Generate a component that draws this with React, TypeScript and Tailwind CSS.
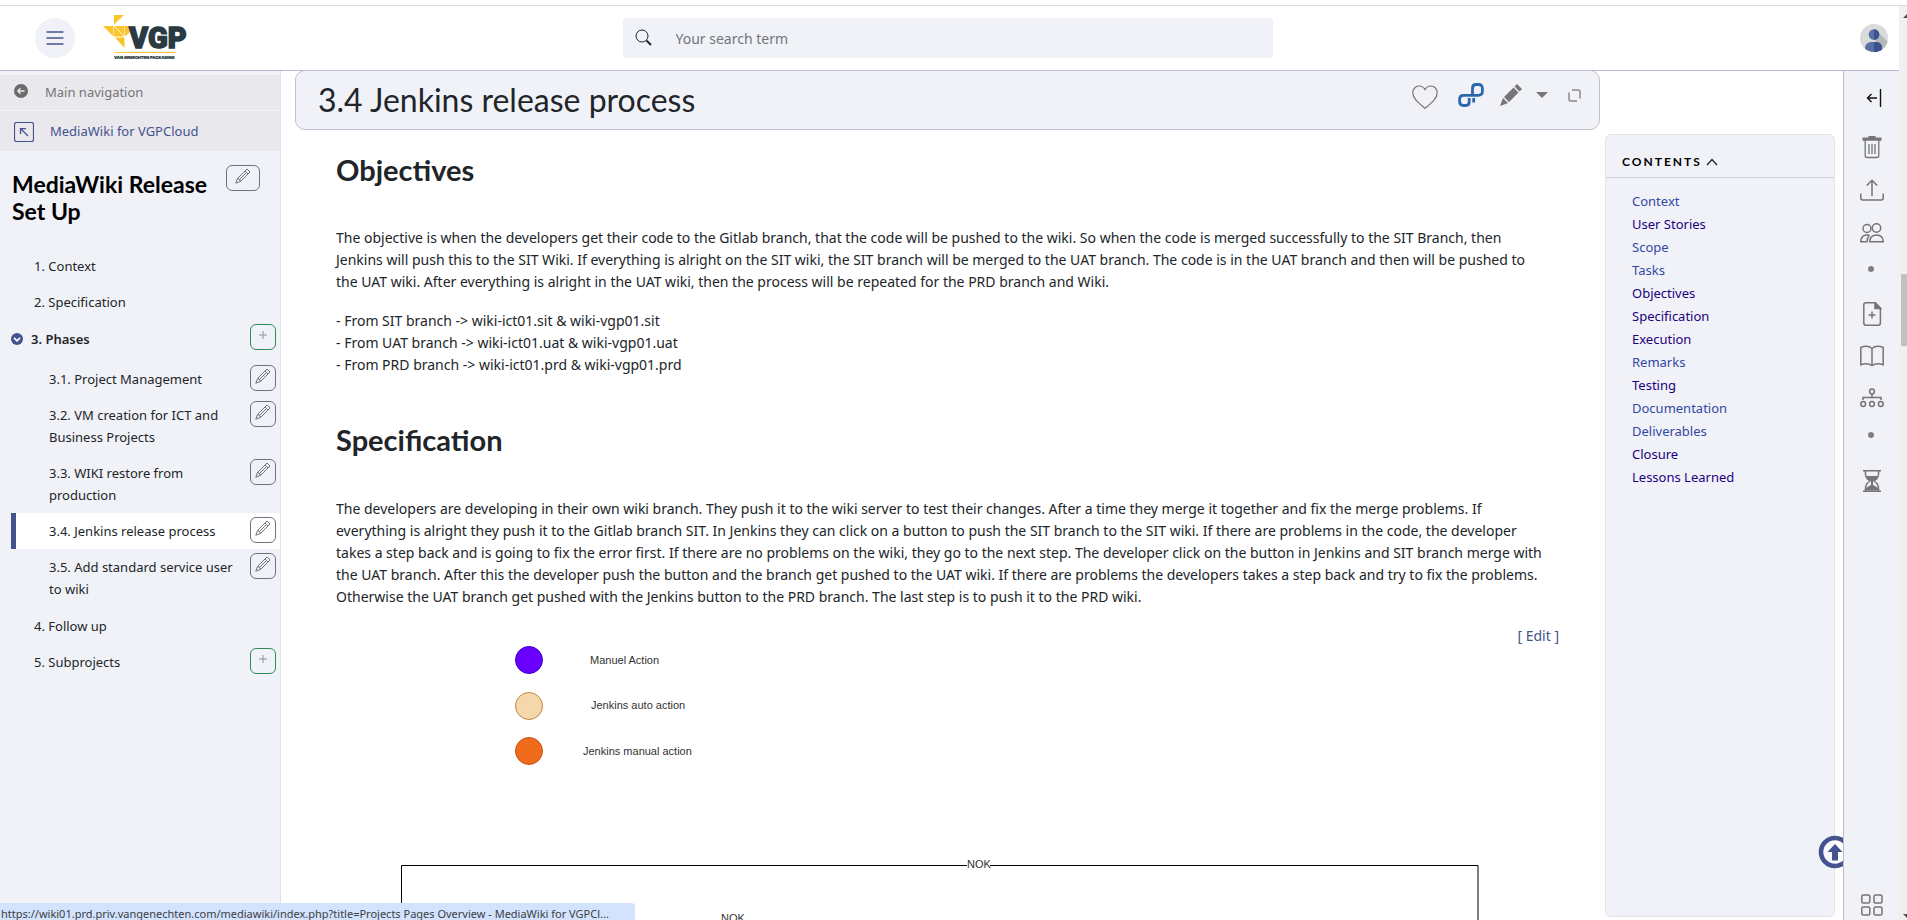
import type { ReactNode } from "react";

type NavItem = { label: string; button?: "edit" | "add"; active?: boolean };

const topItems: NavItem[] = [{ label: "1. Context" }, { label: "2. Specification" }];

const phases: NavItem[] = [
  { label: "3.1. Project Management", button: "edit" },
  { label: "3.2. VM creation for ICT and Business Projects", button: "edit" },
  { label: "3.3. WIKI restore from production", button: "edit" },
  { label: "3.4. Jenkins release process", button: "edit", active: true },
  { label: "3.5. Add standard service user to wiki", button: "edit" },
];

const lastItems: NavItem[] = [{ label: "4. Follow up" }, { label: "5. Subprojects", button: "add" }];

const contents = [
  { label: "Context", visited: false },
  { label: "User Stories", visited: true },
  { label: "Scope", visited: false },
  { label: "Tasks", visited: false },
  { label: "Objectives", visited: true },
  { label: "Specification", visited: true },
  { label: "Execution", visited: true },
  { label: "Remarks", visited: false },
  { label: "Testing", visited: true },
  { label: "Documentation", visited: false },
  { label: "Deliverables", visited: false },
  { label: "Closure", visited: true },
  { label: "Lessons Learned", visited: true },
];

function Pencil() {
  return (
    <svg viewBox="0 0 16 16" className="size-4" fill="none" stroke="#6c757d" strokeWidth="1">
      <path d="M.8 15.2 2.6 10.4 12 1l3 3-9.400 9.400zM10 3l3 3M2.600 10.400l1.200.3.4 1.200 1.100.3.3 1.100M11 5 4.200 11.800" />
    </svg>
  );
}

function ItemButton({ kind, label }: { kind: "edit" | "add"; label: string }) {
  return kind === "edit" ? (
    <button aria-label={`Edit ${label}`} className="flex size-[26px] shrink-0 justify-center rounded-md border border-[#6c757d] pt-0.5">
      <Pencil />
    </button>
  ) : (
    <button aria-label={`Add to ${label}`} className="flex size-[26px] shrink-0 justify-center rounded-md border border-[#2e8b57] pt-1.5">
      <svg viewBox="0 0 8 8" className="size-2" stroke="#8d959c" fill="none">
        <path d="M4 0v8M0 4h8" />
      </svg>
    </button>
  );
}

function NavRow({ item, nested }: { item: NavItem; nested?: boolean }) {
  return (
    <li className={item.active ? "ml-[11px] flex justify-between border-l-[5px] border-[#44538d] bg-white pl-[33px] pr-1" : nested ? "flex justify-between pl-[49px] pr-1" : "flex justify-between pl-[34px] pr-1"}>
      <a href="#" className="w-[197px] py-[7px] leading-[22px]">{item.label}</a>
      {item.button && (
        <span className="pt-1">
          <ItemButton kind={item.button} label={item.label} />
        </span>
      )}
    </li>
  );
}

function Tool({ label, children }: { label: string; children: ReactNode }) {
  return (
    <button aria-label={label} className="flex size-6 items-center justify-center">
      <svg viewBox="0 0 24 24" className="size-6" fill="none" stroke="#757575" strokeWidth="1.5">
        {children}
      </svg>
    </button>
  );
}

function Dot() {
  return <div className="mr-0.5 size-1.5 rounded-full bg-[#808080]" />;
}

function Logo() {
  return (
    <svg viewBox="0 0 86 48" className="h-12 w-[86px]" role="img" aria-label="VGP Van Genechten Packaging">
      <g fill="#f9c52a">
        <path d="M11 1h10L11 10.500zM0 12h10.500v10.500zM11.500 12h10v10zM11 12.500l10 10H11zM22 12h11L22 22.500zM12 23.500h9.500V34z" />
        <path d="M11.500 38h61v1h-61z" />
      </g>
      <text x="26" y="34" fontFamily="Roboto, sans-serif" fontWeight="900" fontSize="29" fill="#293a42" stroke="#293a42" strokeWidth="1.4">VGP</text>
      <text x="11" y="45" fontFamily="Inter, sans-serif" fontWeight="900" fontSize="4" fill="#293a42" stroke="#293a42" strokeWidth="0.2">VAN GENECHTEN PACKAGING</text>
    </svg>
  );
}

function Header() {
  return (
    <header className="flex h-[65px] shrink-0 items-center border-b border-[#b5bad6] pr-1">
      <div className="flex flex-1 basis-0 items-center">
        <button aria-label="Toggle navigation" className="ml-[35px] flex size-10 items-center justify-center rounded-full bg-[#f1f2f8]">
          <svg viewBox="0 0 18 14" className="h-[14px] w-[18px]" stroke="#44538d" strokeWidth="1.300" strokeLinecap="round">
            <path d="M1 1h16M1 7h16M1 13h16" />
          </svg>
        </button>
        <a href="#" className="ml-7">
          <Logo />
        </a>
      </div>
      <form className="flex h-10 w-[650px] items-center rounded bg-[#f1f2f8] pl-3">
        <label htmlFor="search" className="-mt-0.5">
          <svg viewBox="0 0 17 17" className="size-[17px]" fill="none" stroke="#212529" role="img" aria-label="Search">
            <circle cx="7" cy="7" r="6" />
            <path d="m11.500 11.500 4.500 4.500" strokeWidth="2" />
          </svg>
        </label>
        <input id="search" placeholder="Your search term" className="h-full flex-1 bg-transparent pl-6 text-[14px] outline-none placeholder:text-[#70757a]" />
      </form>
      <div className="flex flex-1 basis-0 justify-end">
        <button aria-label="User menu" className="mr-[7px] size-7">
          <svg viewBox="0 0 28 28" className="size-7">
            <clipPath id="avatar"><circle cx="14" cy="14" r="14" /></clipPath>
            <g clipPath="url(#avatar)">
              <path fill="#d9dbdb" d="M0 0h28v28H0z" />
              <path fill="#b5b8b9" d="m17 7 11 11v10H14z" />
              <rect x="5" y="18" width="17" height="14" rx="6" fill="#5870a5" />
              <path fill="#3a5390" d="M14 18h2q6 0 6 6v8h-8z" />
              <circle cx="14" cy="10.500" r="5.300" fill="#5870a5" />
              <path fill="#3a5390" d="M14 5.200a5.300 5.300 0 0 1 0 10.600z" />
            </g>
          </svg>
        </button>
      </div>
    </header>
  );
}

function Sidebar() {
  return (
    <nav className="w-[281px] shrink-0 overflow-hidden border-r border-[#dfe1e6] bg-[#f1f2f8] pt-1 text-[13px] text-[#212529]">
      <a href="#" className="flex h-9 items-center border-b border-[#f4f4f8] bg-[#e9e8ed] pl-3.5 text-[#757575]">
        <svg viewBox="0 0 14 14" className="-mt-1 size-[14px]">
          <circle cx="7" cy="7" r="7" fill="#6c6c6c" />
          <path d="M10.500 7H4M6.500 4.300 3.800 7l2.700 2.700" fill="none" stroke="#e9e8ed" strokeWidth="1.300" />
        </svg>
        <span className="ml-[17px]">Main navigation</span>
      </a>
      <a href="#" className="flex h-10 items-center bg-[#e9e8ed] pt-px pl-3.5 text-[#44538d]">
        <svg viewBox="0 0 20 20" className="size-5" fill="none" stroke="#44538d">
          <rect x=".5" y=".5" width="19" height="19" rx="2" strokeWidth="1.200" />
          <path d="M14 14 7 7M6.500 12V6.700H12" strokeWidth="1.300" />
        </svg>
        <span className="ml-4">MediaWiki for VGPCloud</span>
      </a>
      <div className="flex items-start justify-between pl-3 pr-5 pt-3.5">
        <h2 className="mt-1.5 font-['Lato',sans-serif] text-[23px] leading-[27px] font-bold text-black">
          MediaWiki Release<br />Set Up
        </h2>
        <button aria-label="Edit book" className="flex h-[26px] w-[34px] justify-center rounded-md border border-[#6c757d] pt-0.5">
          <Pencil />
        </button>
      </div>
      <ul className="mt-[23px]">
        {topItems.map((i) => <NavRow key={i.label} item={i} />)}
        <li className="mt-px">
          <div className="flex items-start justify-between pl-[11px] pr-1">
            <div className="flex items-center">
              <button aria-label="Collapse Phases">
                <svg viewBox="0 0 12 12" className="size-3">
                  <circle cx="6" cy="6" r="6" fill="#44538d" />
                  <path d="M3 4.800 6 7.800l3-3" fill="none" stroke="#fff" strokeWidth="1.800" />
                </svg>
              </button>
              <a href="#" className="py-[7px] pl-2 leading-[22px] font-semibold">3. Phases</a>
            </div>
            <span className="pt-[3px]"><ItemButton kind="add" label="3. Phases" /></span>
          </div>
          <ul className="mt-1">
            {phases.map((i) => <NavRow key={i.label} item={i} nested />)}
          </ul>
        </li>
        <li className="mt-px">
          <ul>
            {lastItems.map((i) => <NavRow key={i.label} item={i} />)}
          </ul>
        </li>
      </ul>
    </nav>
  );
}

function TitleBar() {
  return (
    <div className="-mt-px flex h-[60px] items-start justify-between rounded-[10px] border border-[#bfc1cb] bg-[#f1f2f8] pr-[18px] pl-[22px]">
      <h1 className="mt-2 font-['Lato',sans-serif] text-[32px] leading-[42px] text-[#212529]">3.4 Jenkins release process</h1>
      <div className="mt-2.5 flex items-center">
        <button aria-label="Add to watchlist" className="mt-1">
          <svg viewBox="0 0 26 24" className="h-6 w-[26px]" fill="none" stroke="#757575" strokeWidth="1.200">
            <path d="M13 23.300C6 17.500.8 13.500.8 7.800.8 4 3.500 1 7 1c2.600 0 4.800 1.400 6 3.600C14.200 2.400 16.400 1 19 1c3.500 0 6.200 3 6.200 6.800 0 5.700-5.200 9.700-12.200 15.500z" />
          </svg>
        </button>
        <button aria-label="Share link" className="ml-5">
          <svg viewBox="0 0 26 24" className="h-6 w-[26px]" fill="none" stroke="#2c68ad" strokeWidth="2.800">
            <path d="M11.200 15V19q0 3.500-3.500 3.500H5.500Q1.600 22.500 1.600 18.800v-2.500q0-4 4-4H20q4.400 0 4.400-4V5.500Q24.400 1.500 20.500 1.500H18q-3.500 0-3.500 4v6.500M15.700 15v4.500" />
          </svg>
        </button>
        <button aria-label="Edit page" className="ml-4">
          <svg viewBox="0 0 22 22" className="size-[22px]" fill="#757575">
            <path d="M0 22 3 14l5 5zM4 13 13.500 3.500l5 5L9 18zM14.500 2.500 17 0l5 5-2.500 2.500z" />
          </svg>
        </button>
        <button aria-label="More actions" className="ml-3.5">
          <svg viewBox="0 0 12 6" className="h-1.5 w-3" fill="#757575"><path d="M0 0h12L6 6z" /></svg>
        </button>
        <button aria-label="Full screen" className="ml-5">
          <svg viewBox="0 0 13 13" className="size-[13px]" fill="none" stroke="#8a8a8a" strokeWidth="1.500">
            <path d="M4 1h6.500q1.500 0 1.500 1.500V9.500M9 12H2.500Q1 12 1 10.500V3.500" />
          </svg>
        </button>
      </div>
    </div>
  );
}

function ReleaseDiagram() {
  return (
    <svg className="h-[280px] w-full overflow-visible font-['Liberation_Sans',sans-serif] text-[11px]" fill="#333">
      <circle cx="193" cy="13" r="13.500" fill="#6a00ff" stroke="#3700cc" />
      <circle cx="193" cy="59" r="13.500" fill="#f5d7ac" stroke="#c0873f" />
      <circle cx="193" cy="104" r="13.500" fill="#f06c1a" stroke="#c8501a" />
      <text x="254" y="17">Manuel Action</text>
      <text x="255" y="62">Jenkins auto action</text>
      <text x="247" y="108">Jenkins manual action</text>
      <path d="M631 218.500H65.500V280M654 218.500h488V280" fill="none" stroke="#000" />
      <text x="631" y="221">NOK</text>
      <text x="385" y="275">NOK</text>
    </svg>
  );
}

function Article() {
  return (
    <article className="pl-[41px] pr-[41px] text-[14px] leading-[22px] text-[#212529]">
      <h2 className="mt-[22px] font-['Lato',sans-serif] text-[29px] leading-9 font-bold">Objectives</h2>
      <p className="mt-[39px]">
        The objective is when the developers get their code to the Gitlab branch, that the code will be pushed to the wiki. So when the code is merged successfully to the SIT Branch, then<br />
        Jenkins will push this to the SIT Wiki. If everything is alright on the SIT wiki, the SIT branch will be merged to the UAT branch. The code is in the UAT branch and then will be pushed to<br />
        the UAT wiki. After everything is alright in the UAT wiki, then the process will be repeated for the PRD branch and Wiki.
      </p>
      <p className="mt-[17px]">
        - From SIT branch -&gt; wiki-ict01.sit &amp; wiki-vgp01.sit<br />
        - From UAT branch -&gt; wiki-ict01.uat &amp; wiki-vgp01.uat<br />
        - From PRD branch -&gt; wiki-ict01.prd &amp; wiki-vgp01.prd
      </p>
      <h2 className="mt-[46px] font-['Lato',sans-serif] text-[29px] leading-9 font-bold">Specification</h2>
      <p className="mt-10">
        The developers are developing in their own wiki branch. They push it to the wiki server to test their changes. After a time they merge it together and fix the merge problems. If<br />
        everything is alright they push it to the Gitlab branch SIT. In Jenkins they can click on a button to push the SIT branch to the SIT wiki. If there are problems in the code, the developer<br />
        takes a step back and is going to fix the error first. If there are no problems on the wiki, they go to the next step. The developer click on the button in Jenkins and SIT branch merge with<br />
        the UAT branch. After this the developer push the button and the branch get pushed to the UAT wiki. If there are problems the developers takes a step back and try to fix the problems.<br />
        Otherwise the UAT branch get pushed with the Jenkins button to the PRD branch. The last step is to push it to the PRD wiki.
      </p>
      <div className="mt-[17px] text-right text-[#44538d]">
        [ <a href="#">Edit</a> ]
      </div>
      <ReleaseDiagram />
    </article>
  );
}

function Contents() {
  return (
    <aside className="mt-[63px] mb-[3px] w-[230px] rounded-md border border-[#e3e4e8] bg-[#f1f2f8]">
      <button className="flex h-[43px] w-full items-center gap-1 border-b border-[#cfd1d8] pt-3 pl-4 font-['Lato',sans-serif] text-[12px] font-bold tracking-[2px] text-black">
        CONTENTS
        <svg viewBox="0 0 12 8" className="h-2 w-3" fill="none" stroke="#212529" strokeWidth="1.300"><path d="m1 7 5-5.500L11 7" /></svg>
      </button>
      <ul className="pt-3 pl-[26px] text-[13px] leading-[23px]">
        {contents.map((c) => (
          <li key={c.label}>
            <a href="#" className={c.visited ? "text-[#1c0080]" : "text-[#3148a5]"}>{c.label}</a>
          </li>
        ))}
      </ul>
    </aside>
  );
}

function Toolbar() {
  return (
    <aside className="flex w-14 shrink-0 flex-col items-center border-l border-[#bcbdc2] bg-[#f1f2f8] pt-[15px] pb-[3px]">
      <button aria-label="Collapse tools">
        <svg viewBox="0 0 24 24" className="size-6" fill="none" stroke="#111" strokeWidth="1.400">
          <path d="M17 12H7.500M11.500 8l-4 4 4 4" />
          <path d="M20.500 3v18" />
        </svg>
      </button>
      <div className="mt-[25px] flex flex-col items-center gap-[19px]">
        <Tool label="Delete">
          <path d="M2.500 2.500h19v3.300h-19zM8.500 1h7v2h-7z" fill="#757575" stroke="none" />
          <path d="M5.200 5v15.500q0 2 2 2h9.600q2 0 2-2V5M9 9v10M12 9v10M15 9v10" strokeWidth="1.300" />
        </Tool>
        <Tool label="Upload">
          <path d="M.8 15.500v4.500q0 2 2 2h18.400q2 0 2-2v-4.500M12 18V2.500M6.800 7.500 12 2.300l5.200 5.200" />
        </Tool>
        <Tool label="Members">
          <circle cx="7" cy="7.500" r="4" />
          <circle cx="16.500" cy="7" r="4.200" />
          <path d="M9.800 20.800c0-4.200 2.500-6.800 6.700-6.800s6.700 2.600 6.700 6.800zM9.500 14.200C4 13 .8 15.500.8 20.800H7c0-3 .8-5 2.500-6.600" />
        </Tool>
      </div>
      <div className="mt-[21px]"><Dot /></div>
      <div className="mt-[30px] flex flex-col items-center gap-[18px]">
        <Tool label="New page">
          <path d="M15.500.8H6Q3.800.8 3.800 3v18q0 2.200 2.200 2.200h12.200q2.200 0 2.200-2.200V6zM12 9.500v7M8.500 13h7" />
          <path d="M15 1v5.500h5.500z" fill="#757575" />
        </Tool>
        <Tool label="Books">
          <path d="M12 4.500C9.500 2.300 5 1.800.8 3.500v17.300c4.200-1.500 8.200-1.300 11.200.7 3-2 7-2.200 11.200-.7V3.500C19 1.800 14.500 2.300 12 4.500zM12 4.500v17" />
        </Tool>
        <Tool label="Hierarchy">
          <circle cx="12" cy="5.500" r="2.400" />
          <circle cx="3.200" cy="18" r="2.400" />
          <circle cx="12" cy="18" r="2.400" />
          <circle cx="20.800" cy="18" r="2.400" />
          <path d="M12 8v4M3 14v-2.500h18V14" />
        </Tool>
      </div>
      <div className="mt-[22px]"><Dot /></div>
      <div className="mt-[31px]">
        <Tool label="History">
          <path d="M3 1.800h18M3 22.200h18M5.300 2c0 6 1.200 7.500 4.800 10-3.600 2.500-4.800 4-4.800 10M18.700 2c0 6-1.200 7.500-4.800 10 3.600 2.500 4.800 4 4.800 10" />
          <path d="M6.500 7h11c-.8 2.500-2.500 3.700-4.500 5v4l4.500 2.500 1 3h-13l1-3L11 16v-4C9 10.700 7.300 9.500 6.500 7z" fill="#757575" stroke="none" />
        </Tool>
      </div>
      <div className="mt-auto">
        <Tool label="Apps">
          <rect x="1.800" y="2" width="8" height="8" rx="1.500" />
          <rect x="14" y="2" width="8" height="8" rx="1.500" />
          <rect x="1.800" y="14" width="8" height="8" rx="1.500" />
          <rect x="14" y="14" width="8" height="8" rx="1.500" />
        </Tool>
      </div>
    </aside>
  );
}

export default function App() {
  return (
    <div className="flex h-screen flex-col overflow-hidden bg-white font-['Noto_Sans',sans-serif]">
      <div className="h-1.5 shrink-0 border-b border-[#dcdcdc]" />
      <div className="flex min-h-0 flex-1">
        <div className="flex min-w-0 flex-1 flex-col">
          <Header />
          <div className="flex min-h-0 flex-1">
            <Sidebar />
            <div className="relative flex min-w-0 flex-1">
              <main className="h-full min-w-0 flex-1 pl-3.5">
                <TitleBar />
                <Article />
              </main>
              <div className="flex pr-2 pl-[5px]">
                <Contents />
              </div>
              <div className="absolute right-0 bottom-[51px] w-[25px] overflow-hidden">
                <button aria-label="Back to top" className="block">
                  <svg viewBox="0 0 34 34" className="size-[34px]">
                    <circle cx="17" cy="17" r="14" fill="#fff" fillOpacity="0.500" stroke="#44538d" strokeWidth="4.600" />
                    <path d="m17 9 7.500 8H20v8.500h-6V17H9.500z" fill="#44538d" />
                  </svg>
                </button>
              </div>
            </div>
            <Toolbar />
          </div>
        </div>
        <div className="flex w-2 shrink-0 flex-col items-end justify-between bg-[#f0f0f0]" aria-hidden="true">
          <svg viewBox="0 0 4 4" className="mt-2 size-1" fill="#505050"><path d="M4 0v4H0z" /></svg>
          <div className="flex w-1.5 flex-1 flex-col pt-[256px]">
            <div className="h-[72px] bg-[#c1c1c1]" />
          </div>
          <svg viewBox="0 0 4 4" className="mb-0.5 size-1" fill="#505050"><path d="M0 0h4v4z" /></svg>
        </div>
      </div>
      <div className="fixed bottom-0 left-0 h-[17px] w-[635px] overflow-hidden rounded-tr bg-[#d3e3fd] pl-px text-[11px] leading-[22px] whitespace-nowrap text-[#3c4043]">
        https://wiki01.prd.priv.vangenechten.com/mediawiki/index.php?title=Projects Pages Overview - MediaWiki for VGPCl...
      </div>
    </div>
  );
}
